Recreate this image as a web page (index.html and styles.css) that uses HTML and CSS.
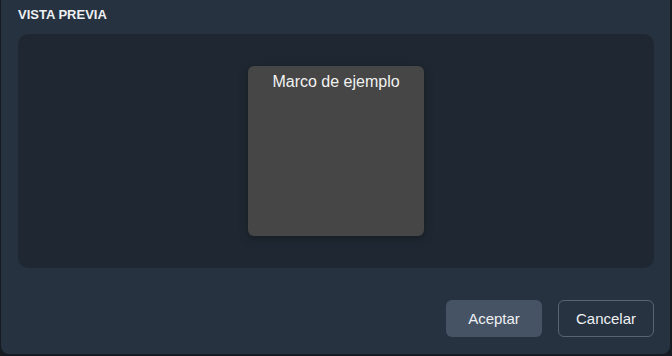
FILE: index.html
```html
<!DOCTYPE html>
<html lang="es">
<head>
<meta charset="utf-8">
<link rel="stylesheet" href="styles.css">
</head>
<body>
<div class="dialog">
  <div class="title">VISTA PREVIA</div>
  <div class="preview">
    <div class="card">Marco de ejemplo</div>
  </div>
  <div class="actions">
    <button class="btn btn-primary">Aceptar</button>
    <button class="btn btn-secondary">Cancelar</button>
  </div>
</div>
</body>
</html>
```
FILE: styles.css
```css
html, body {
  margin: 0;
  padding: 0;
  background: #161b22;
  width: 672px;
  height: 356px;
  overflow: hidden;
}
body {
  font-family: "Liberation Sans", Arial, sans-serif;
}
.dialog {
  margin-left: 1px;
  width: 669px;
  height: 354px;
  box-sizing: border-box;
  background: #273241;
  border-radius: 0 0 8px 8px;
  padding: 0 16px 17px 17px;
  display: flex;
  flex-direction: column;
}
.title {
  height: 28px;
  line-height: 29px;
  font-size: 13px;
  font-weight: bold;
  color: #eef0f3;
  margin-bottom: 6px;
}
.preview {
  height: 234px;
  background: #1f2832;
  border-radius: 10px;
  display: flex;
  align-items: center;
  justify-content: center;
}
.card {
  width: 176px;
  height: 170px;
  background: #464646;
  border-radius: 6px;
  box-shadow: 0 2px 8px rgba(0, 0, 0, 0.35);
  color: #f2f2f2;
  font-size: 16px;
  line-height: 19px;
  text-align: center;
  padding-top: 6px;
  box-sizing: border-box;
}
.actions {
  margin-top: 32px;
  display: flex;
  justify-content: flex-end;
  gap: 16px;
}
.btn {
  width: 96px;
  height: 37px;
  border-radius: 6px;
  font-family: "Liberation Sans", Arial, sans-serif;
  font-size: 15px;
  color: #eef0f3;
  cursor: pointer;
  padding: 0;
}
.btn-primary {
  background: #465365;
  border: none;
}
.btn-secondary {
  background: #283341;
  border: 1px solid #586474;
}
```
